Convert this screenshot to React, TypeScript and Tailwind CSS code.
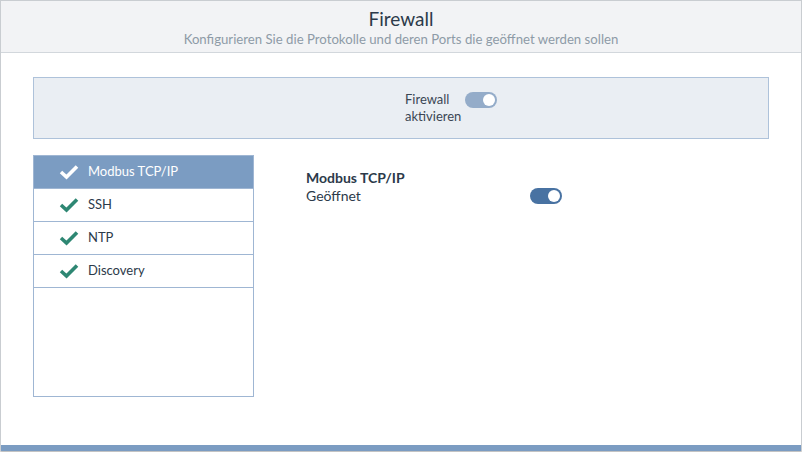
import React from "react";

function Check({ color }: { color: string }) {
  return (
    <svg width="20" height="16" viewBox="0 0 20 16" className="shrink-0">
      <path d="M2 8 L7.5 13 L18 2.5" fill="none" stroke={color} strokeWidth="3.6" strokeLinecap="butt" strokeLinejoin="miter" />
    </svg>
  );
}

function Toggle({ track }: { track: string }) {
  return (
    <div className={`relative h-[16px] w-[32px] rounded-full ${track}`}>
      <div className="absolute right-[2px] top-[2px] h-[12px] w-[12px] rounded-full bg-white" />
    </div>
  );
}

const items = ["Modbus TCP/IP", "SSH", "NTP", "Discovery"];

export default function App() {
  return (
    <div className="h-[452px] w-[802px] bg-white" style={{ fontFamily: "'Source Sans Pro', Lato, 'Noto Sans', sans-serif" }}>
      <div className="flex h-[451px] w-[802px] flex-col border border-b-0 border-[#c9cdd1] shadow-[0_1px_2px_rgba(0,0,0,0.35)]">
        <div className="flex h-[52px] flex-col items-center border-b border-[#d2d7dc] bg-[#f2f3f5] pt-[6px]">
          <div className="text-[19px] leading-[24px] text-[#2c3a4a]">Firewall</div>
          <div className="text-[13.2px] leading-[17px] text-[#8e9ba7]">Konfigurieren Sie die Protokolle und deren Ports die geöffnet werden sollen</div>
        </div>
        <div className="flex flex-1 flex-col px-[32px] pt-[24px]">
          <div className="flex h-[62px] items-center border border-[#aec2da] bg-[#eaeef3]">
            <div className="flex-1" />
            <div className="flex flex-1 items-start gap-[4px] pl-[8px]">
              <div className="text-left text-[13px] leading-[17px] text-[#3a4654]">Firewall<br />aktivieren</div>
              <div className="pt-[1px]"><Toggle track="bg-[#94acc9]" /></div>
            </div>
          </div>
          <div className="mt-[16px] flex items-start">
            <div className="flex h-[242px] w-[221px] flex-col border border-[#9fb6d3]">
              {items.map((it, i) => (
                <div
                  key={it}
                  className={`flex h-[33px] shrink-0 items-center gap-[9px] border-b border-[#9fb6d3] pl-[25px] text-[13px] ${i === 0 ? "bg-[#7b9cc2] text-white" : "text-[#2c3a4a]"}`}
                >
                  <Check color={i === 0 ? "#ffffff" : "#2e8773"} />
                  <span>{it}</span>
                </div>
              ))}
            </div>
            <div className="ml-[52px] mt-[14px] flex w-[256px] items-end justify-between">
              <div>
                <div className="text-[14px] font-bold leading-[18px] text-[#2c3a4a]">Modbus TCP/IP</div>
                <div className="text-[14px] leading-[18px] text-[#2c3a4a]">Geöffnet</div>
              </div>
              <div className="mb-[1px]"><Toggle track="bg-[#4872a2]" /></div>
            </div>
          </div>
        </div>
        <div className="h-[6px] bg-[#7b9cc2]" />
      </div>
    </div>
  );
}
